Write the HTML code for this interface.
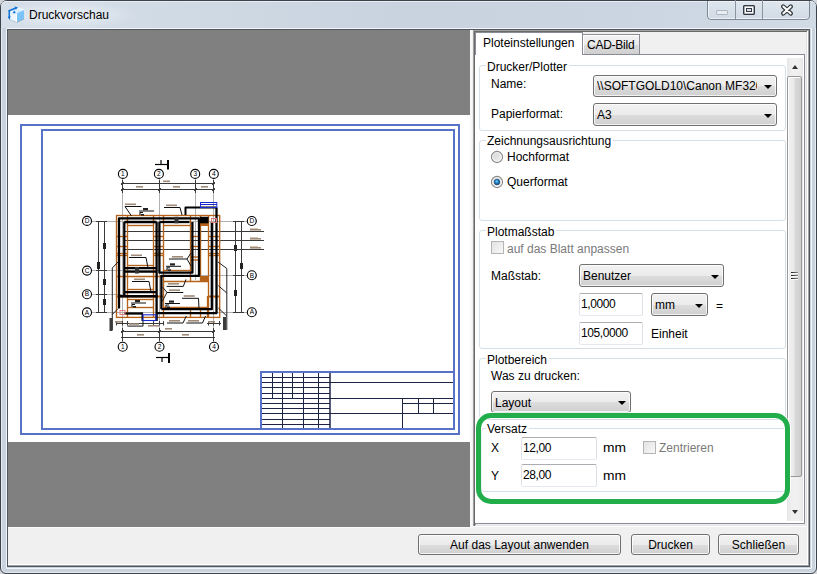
<!DOCTYPE html><html><head><meta charset="utf-8"><title>Druckvorschau</title><style>
*{margin:0;padding:0;box-sizing:border-box}
html,body{width:817px;height:574px;overflow:hidden;background:#d4d6d9}
body{position:relative;font-family:"Liberation Sans",sans-serif;font-size:12px}
.a{position:absolute}
.t{position:absolute;white-space:pre;font-size:12px;line-height:14px;font-family:"Liberation Sans",sans-serif}
.grp{position:absolute;border:1px solid #d5dfe5;border-radius:3px}
.lg{position:absolute;background:#fff;white-space:pre;font-size:12px;line-height:14px;padding:0 2px 0 1px}
.cb{position:absolute;border:1px solid #707070;border-radius:3px;background:linear-gradient(#f2f2f2 0%,#ebebeb 50%,#dddddd 51%,#cfcfcf 100%);box-shadow:inset 0 0 0 1px rgba(255,255,255,.75)}
.tb{position:absolute;border:1px solid #abadb3;border-top-color:#abadb3;border-left-color:#e2e3ea;border-right-color:#dbdfe6;border-bottom-color:#e3e9ef;background:#fff;border-radius:2px}
.btn{position:absolute;border:1px solid #707070;border-radius:3px;background:linear-gradient(#f2f2f2 0%,#ebebeb 50%,#dddddd 51%,#cfcfcf 100%);box-shadow:inset 0 0 0 1px rgba(255,255,255,.8);text-align:center;line-height:19px;white-space:pre}
.arr{position:absolute;width:0;height:0;border-left:4px solid transparent;border-right:4px solid transparent;border-top:4.5px solid #000}
</style></head><body>
<div class="a" style="left:0;top:0;width:817px;height:574px;border:1px solid #3d434a;border-radius:7px 7px 6px 6px;background:#c8d3de;box-shadow:inset 0 0 0 1px #e6ecf3"></div>
<div class="a" style="left:1px;top:1px;width:815px;height:27px;border-radius:5px 5px 0 0;background:linear-gradient(90deg,#d6dfe9 0%,#cfd9e4 25%,#c8d3df 50%,#cad5e1 75%,#d1dbe6 100%);border-top:1px solid #e9eef4"></div>
<div class="a" style="left:0;top:0;width:150px;height:28px;background:radial-gradient(ellipse 70px 14px at 68px 15px,rgba(240,244,249,.75),rgba(240,244,249,0))"></div>
<svg class="a" style="left:0;top:0" width="30" height="30" viewBox="0 0 30 30">
<path d="M10 10.5 L17 7.5 L24 10 L16.5 13.5 Z" fill="#d9eefd"/>
<path d="M10 10.5 L16.5 13.5 L16.5 22.5 L10 19.5 Z" fill="#eef7fe"/>
<path d="M16.5 13.5 L24 10 L24 19 L16.5 22.5 Z" fill="#7cc3f8"/>
<path d="M16.5 13.5 L16.5 22.5" stroke="#fff" stroke-width="1"/>
<path d="M10 10.5 L17 7.5 L24 10" stroke="#ffffff" stroke-width="0.8" fill="none"/>
<path d="M16.5 22.5 L24 19" stroke="#8aa3b8" stroke-width="0.8" fill="none"/>
<path d="M10 19.5 L16.5 22.5" stroke="#a9bccb" stroke-width="0.8" fill="none"/>
<path d="M9.3 10.5 L9.3 17.5" stroke="#1273d9" stroke-width="1.6"/>
<path d="M7.8 16.5 L10.8 16.5 L9.3 20 Z" fill="#1273d9"/>
<path d="M8.5 11 L16 8" stroke="#1273d9" stroke-width="1.6"/>
<path d="M14.5 6.5 L18 7.3 L15.8 9.8 Z" fill="#1273d9"/>
<path d="M12.5 13.3 L15.8 13.3 L14.3 10.5 Z" fill="#1273d9"/>
</svg>
<div class="t" style="left:29px;top:8px;color:#000;">Druckvorschau</div>
<div class="a" style="left:707px;top:-1px;width:103px;height:21px;border:1px solid #7d8895;border-radius:0 0 4px 4px;background:linear-gradient(#dfe6ee,#d2dbe5);box-shadow:inset 0 -1px 0 #eef3f8,inset 1px 0 0 #eef3f8"></div>
<div class="a" style="left:700px;top:0px;width:110px;height:1px;background:#3d434a"></div>
<div class="a" style="left:708px;top:1px;width:101px;height:1px;background:#eef2f6"></div>
<div class="a" style="left:735px;top:0px;width:1px;height:19px;background:#8a95a2"></div>
<div class="a" style="left:762px;top:0px;width:1px;height:19px;background:#8a95a2"></div>
<div class="a" style="left:716px;top:10px;width:12px;height:5px;border:1px solid #aeb7c1;background:#e9eef3;border-radius:1px"></div>
<div class="a" style="left:743px;top:5px;width:12px;height:10px;border:1px solid #353a42;background:#fff;border-radius:1px;box-shadow:inset 0 0 0 0.6px #6a7078"></div>
<div class="a" style="left:746px;top:8px;width:6px;height:4px;border:1px solid #353a42;background:#d5dde6"></div>
<svg class="a" style="left:780px;top:4px" width="14" height="12" viewBox="0 0 14 12">
<path d="M3.3 2.6 L10.7 9.4 M10.7 2.6 L3.3 9.4" stroke="#353a42" stroke-width="4.4" stroke-linecap="round"/>
<path d="M3.3 2.6 L10.7 9.4 M10.7 2.6 L3.3 9.4" stroke="#fff" stroke-width="2" stroke-linecap="round"/>
</svg>
<div class="a" style="left:6px;top:28px;width:806px;height:541px;border:1px solid #f3f6fa;border-radius:1px"></div>
<div class="a" style="left:7px;top:29px;width:803px;height:538px;border:1px solid #50565e;background:#f0f0f0;box-shadow:inset -1px -1px 0 #a0a0a0, inset -2px -2px 0 #fff"></div>
<div class="a" style="left:8px;top:30px;width:462px;height:497px;background:#808080"></div>
<div class="a" style="left:8px;top:115px;width:462px;height:327px;background:#fff"></div>
<div class="a" style="left:470px;top:30px;width:3px;height:497px;background:#f0f0f0"></div>
<div class="a" style="left:470px;top:30px;width:2px;height:497px;background:#f8f8f8"></div>
<div class="a" style="left:8px;top:527px;width:465px;height:1px;background:#fafafa"></div>
<svg class="a" style="left:0;top:0" width="817" height="574" viewBox="0 0 817 574"><rect x="21" y="125" width="438" height="309" stroke="#5872c8" stroke-width="2" fill="none"/><rect x="42" y="130" width="412" height="299" stroke="#5872c8" stroke-width="2" fill="none"/><rect x="260" y="371" width="2" height="58" fill="#5872c8"/><rect x="260" y="371" width="194" height="2" fill="#5872c8"/><line x1="262" y1="377.5" x2="330" y2="377.5" stroke="#1c2444" stroke-width="1"/><line x1="262" y1="382.5" x2="330" y2="382.5" stroke="#1c2444" stroke-width="1"/><line x1="262" y1="387.5" x2="330" y2="387.5" stroke="#1c2444" stroke-width="1"/><line x1="262" y1="393.5" x2="330" y2="393.5" stroke="#1c2444" stroke-width="1"/><line x1="262" y1="398.5" x2="330" y2="398.5" stroke="#1c2444" stroke-width="1"/><line x1="262" y1="403.5" x2="330" y2="403.5" stroke="#1c2444" stroke-width="1"/><line x1="262" y1="408.5" x2="330" y2="408.5" stroke="#1c2444" stroke-width="1"/><line x1="262" y1="413.5" x2="330" y2="413.5" stroke="#1c2444" stroke-width="1"/><line x1="262" y1="419.5" x2="330" y2="419.5" stroke="#1c2444" stroke-width="1"/><line x1="262" y1="424.5" x2="330" y2="424.5" stroke="#1c2444" stroke-width="1"/><line x1="272.5" y1="373" x2="272.5" y2="398.5" stroke="#1c2444" stroke-width="1"/><line x1="292.5" y1="373" x2="292.5" y2="398.5" stroke="#1c2444" stroke-width="1"/><line x1="282.5" y1="373" x2="282.5" y2="428" stroke="#1c2444" stroke-width="1"/><line x1="303.5" y1="373" x2="303.5" y2="428" stroke="#1c2444" stroke-width="1"/><line x1="318.5" y1="373" x2="318.5" y2="428" stroke="#1c2444" stroke-width="1"/><line x1="330" y1="373" x2="330" y2="428" stroke="#1c2444" stroke-width="1.5"/><line x1="330" y1="382.5" x2="453" y2="382.5" stroke="#1c2444" stroke-width="1"/><line x1="330" y1="398.5" x2="453" y2="398.5" stroke="#1c2444" stroke-width="1"/><line x1="330" y1="413.5" x2="453" y2="413.5" stroke="#1c2444" stroke-width="1"/><line x1="402.5" y1="398.5" x2="402.5" y2="428" stroke="#1c2444" stroke-width="1"/><line x1="418.5" y1="398.5" x2="418.5" y2="413.5" stroke="#1c2444" stroke-width="1"/><line x1="433.5" y1="398.5" x2="433.5" y2="413.5" stroke="#1c2444" stroke-width="1"/><line x1="402.5" y1="403.5" x2="453" y2="403.5" stroke="#1c2444" stroke-width="1"/><line x1="122.5" y1="178" x2="122.5" y2="342" stroke="#b0b0b0" stroke-width="1"/><line x1="159.5" y1="178" x2="159.5" y2="342" stroke="#b0b0b0" stroke-width="1"/><line x1="213.5" y1="178" x2="213.5" y2="342" stroke="#b0b0b0" stroke-width="1"/><line x1="195.5" y1="178" x2="195.5" y2="280" stroke="#b0b0b0" stroke-width="1"/><line x1="91" y1="221.5" x2="247" y2="221.5" stroke="#b0b0b0" stroke-width="1"/><line x1="91" y1="270.5" x2="160" y2="270.5" stroke="#b0b0b0" stroke-width="1"/><line x1="160" y1="275.5" x2="247" y2="275.5" stroke="#b0b0b0" stroke-width="1"/><line x1="91" y1="294.5" x2="126" y2="294.5" stroke="#b0b0b0" stroke-width="1"/><line x1="91" y1="312.5" x2="247" y2="312.5" stroke="#b0b0b0" stroke-width="1"/><line x1="155" y1="164.5" x2="168" y2="164.5" stroke="#000" stroke-width="1.2"/><line x1="161" y1="160" x2="161" y2="164.5" stroke="#000" stroke-width="1.2"/><line x1="168" y1="160" x2="168" y2="169.5" stroke="#000" stroke-width="2"/><line x1="156" y1="357.5" x2="169" y2="357.5" stroke="#000" stroke-width="1.2"/><line x1="162" y1="357.5" x2="162" y2="362" stroke="#000" stroke-width="1.2"/><line x1="169" y1="353" x2="169" y2="363" stroke="#000" stroke-width="2"/><line x1="121" y1="183.5" x2="215" y2="183.5" stroke="#3a3a3a" stroke-width="1"/><line x1="121" y1="189.5" x2="215" y2="189.5" stroke="#3a3a3a" stroke-width="1"/><line x1="122.5" y1="180" x2="122.5" y2="193" stroke="#3a3a3a" stroke-width="1"/><line x1="121.0" y1="191.0" x2="124.0" y2="188.0" stroke="#3a3a3a" stroke-width="1"/><line x1="159.5" y1="180" x2="159.5" y2="193" stroke="#3a3a3a" stroke-width="1"/><line x1="158.0" y1="191.0" x2="161.0" y2="188.0" stroke="#3a3a3a" stroke-width="1"/><line x1="195.5" y1="180" x2="195.5" y2="193" stroke="#3a3a3a" stroke-width="1"/><line x1="194.0" y1="191.0" x2="197.0" y2="188.0" stroke="#3a3a3a" stroke-width="1"/><line x1="213.5" y1="180" x2="213.5" y2="193" stroke="#3a3a3a" stroke-width="1"/><line x1="212.0" y1="191.0" x2="215.0" y2="188.0" stroke="#3a3a3a" stroke-width="1"/><line x1="121.0" y1="185.0" x2="124.0" y2="182.0" stroke="#3a3a3a" stroke-width="1"/><line x1="212.0" y1="185.0" x2="215.0" y2="182.0" stroke="#3a3a3a" stroke-width="1"/><line x1="121" y1="331.5" x2="215" y2="331.5" stroke="#3a3a3a" stroke-width="1"/><line x1="121" y1="337.5" x2="215" y2="337.5" stroke="#3a3a3a" stroke-width="1"/><line x1="122.5" y1="328" x2="122.5" y2="341" stroke="#3a3a3a" stroke-width="1"/><line x1="121.0" y1="333.0" x2="124.0" y2="330.0" stroke="#3a3a3a" stroke-width="1"/><line x1="159.5" y1="328" x2="159.5" y2="341" stroke="#3a3a3a" stroke-width="1"/><line x1="158.0" y1="333.0" x2="161.0" y2="330.0" stroke="#3a3a3a" stroke-width="1"/><line x1="213.5" y1="328" x2="213.5" y2="341" stroke="#3a3a3a" stroke-width="1"/><line x1="212.0" y1="333.0" x2="215.0" y2="330.0" stroke="#3a3a3a" stroke-width="1"/><line x1="116" y1="323.5" x2="164" y2="323.5" stroke="#3a3a3a" stroke-width="1"/><line x1="207" y1="323.5" x2="221" y2="323.5" stroke="#3a3a3a" stroke-width="1"/><line x1="116.5" y1="321" x2="116.5" y2="325.5" stroke="#3a3a3a" stroke-width="1"/><line x1="122.5" y1="321" x2="122.5" y2="325.5" stroke="#3a3a3a" stroke-width="1"/><line x1="127.5" y1="321" x2="127.5" y2="325.5" stroke="#3a3a3a" stroke-width="1"/><line x1="153.5" y1="321" x2="153.5" y2="325.5" stroke="#3a3a3a" stroke-width="1"/><line x1="159.5" y1="321" x2="159.5" y2="325.5" stroke="#3a3a3a" stroke-width="1"/><line x1="163.5" y1="321" x2="163.5" y2="325.5" stroke="#3a3a3a" stroke-width="1"/><line x1="208.5" y1="321" x2="208.5" y2="325.5" stroke="#3a3a3a" stroke-width="1"/><line x1="213.5" y1="321" x2="213.5" y2="325.5" stroke="#3a3a3a" stroke-width="1"/><line x1="219.5" y1="321" x2="219.5" y2="325.5" stroke="#3a3a3a" stroke-width="1"/><line x1="98.5" y1="221" x2="98.5" y2="313" stroke="#3a3a3a" stroke-width="1"/><line x1="104.5" y1="221" x2="104.5" y2="313" stroke="#3a3a3a" stroke-width="1"/><line x1="96" y1="221.5" x2="107" y2="221.5" stroke="#3a3a3a" stroke-width="1"/><line x1="96" y1="270.5" x2="107" y2="270.5" stroke="#3a3a3a" stroke-width="1"/><line x1="96" y1="294.5" x2="107" y2="294.5" stroke="#3a3a3a" stroke-width="1"/><line x1="96" y1="312.5" x2="107" y2="312.5" stroke="#3a3a3a" stroke-width="1"/><rect x="103" y="243" width="3" height="6" fill="#222"/><rect x="103" y="279" width="3" height="6" fill="#222"/><rect x="103" y="299" width="3" height="6" fill="#222"/><rect x="97" y="262" width="3" height="7" fill="#222"/><line x1="235.5" y1="221" x2="235.5" y2="313" stroke="#3a3a3a" stroke-width="1"/><line x1="241.5" y1="221" x2="241.5" y2="313" stroke="#3a3a3a" stroke-width="1"/><line x1="233" y1="221.5" x2="244" y2="221.5" stroke="#3a3a3a" stroke-width="1"/><line x1="233" y1="275.5" x2="244" y2="275.5" stroke="#3a3a3a" stroke-width="1"/><line x1="233" y1="312.5" x2="244" y2="312.5" stroke="#3a3a3a" stroke-width="1"/><rect x="234" y="245" width="3" height="6" fill="#222"/><rect x="234" y="290" width="3" height="6" fill="#222"/><rect x="240" y="263" width="3" height="6" fill="#222"/><line x1="124" y1="231.5" x2="264" y2="231.5" stroke="#3a3a3a" stroke-width="1"/><line x1="124" y1="240.5" x2="264" y2="240.5" stroke="#3a3a3a" stroke-width="1"/><line x1="124" y1="249.5" x2="264" y2="249.5" stroke="#3a3a3a" stroke-width="1"/><rect x="250" y="228.5" width="8" height="1.5" fill="#b09070"/><rect x="250" y="237.5" width="8" height="1.5" fill="#b09070"/><rect x="250" y="246.5" width="8" height="1.5" fill="#b09070"/><circle cx="122.9" cy="173.9" r="4.5" stroke="#000" stroke-width="1.1" fill="#fff"/><text x="122.9" y="176.1" font-family="Liberation Sans" font-size="6.5" font-weight="normal" text-anchor="middle" fill="#000">1</text><circle cx="158.9" cy="173.9" r="4.5" stroke="#000" stroke-width="1.1" fill="#fff"/><text x="158.9" y="176.1" font-family="Liberation Sans" font-size="6.5" font-weight="normal" text-anchor="middle" fill="#000">2</text><circle cx="195.2" cy="173.9" r="4.5" stroke="#000" stroke-width="1.1" fill="#fff"/><text x="195.2" y="176.1" font-family="Liberation Sans" font-size="6.5" font-weight="normal" text-anchor="middle" fill="#000">3</text><circle cx="213.8" cy="173.9" r="4.5" stroke="#000" stroke-width="1.1" fill="#fff"/><text x="213.8" y="176.1" font-family="Liberation Sans" font-size="6.5" font-weight="normal" text-anchor="middle" fill="#000">4</text><circle cx="122.7" cy="346.8" r="4.5" stroke="#000" stroke-width="1.1" fill="#fff"/><text x="122.7" y="349.0" font-family="Liberation Sans" font-size="6.5" font-weight="normal" text-anchor="middle" fill="#000">1</text><circle cx="159.5" cy="346.8" r="4.5" stroke="#000" stroke-width="1.1" fill="#fff"/><text x="159.5" y="349.0" font-family="Liberation Sans" font-size="6.5" font-weight="normal" text-anchor="middle" fill="#000">2</text><circle cx="214" cy="346.8" r="4.5" stroke="#000" stroke-width="1.1" fill="#fff"/><text x="214" y="349.0" font-family="Liberation Sans" font-size="6.5" font-weight="normal" text-anchor="middle" fill="#000">4</text><circle cx="87" cy="220.9" r="4.5" stroke="#000" stroke-width="1.1" fill="#fff"/><text x="87" y="223.1" font-family="Liberation Sans" font-size="6.5" font-weight="normal" text-anchor="middle" fill="#000">D</text><circle cx="87" cy="270.6" r="4.5" stroke="#000" stroke-width="1.1" fill="#fff"/><text x="87" y="272.8" font-family="Liberation Sans" font-size="6.5" font-weight="normal" text-anchor="middle" fill="#000">C</text><circle cx="87" cy="294.2" r="4.5" stroke="#000" stroke-width="1.1" fill="#fff"/><text x="87" y="296.4" font-family="Liberation Sans" font-size="6.5" font-weight="normal" text-anchor="middle" fill="#000">B</text><circle cx="87" cy="312.4" r="4.5" stroke="#000" stroke-width="1.1" fill="#fff"/><text x="87" y="314.59999999999997" font-family="Liberation Sans" font-size="6.5" font-weight="normal" text-anchor="middle" fill="#000">A</text><circle cx="251.8" cy="221" r="4.5" stroke="#000" stroke-width="1.1" fill="#fff"/><text x="251.8" y="223.2" font-family="Liberation Sans" font-size="6.5" font-weight="normal" text-anchor="middle" fill="#000">D</text><circle cx="251.8" cy="275.3" r="4.5" stroke="#000" stroke-width="1.1" fill="#fff"/><text x="251.8" y="277.5" font-family="Liberation Sans" font-size="6.5" font-weight="normal" text-anchor="middle" fill="#000">B</text><circle cx="251.8" cy="312.2" r="4.5" stroke="#000" stroke-width="1.1" fill="#fff"/><text x="251.8" y="314.4" font-family="Liberation Sans" font-size="6.5" font-weight="normal" text-anchor="middle" fill="#000">A</text><rect x="116.5" y="215.5" width="103.2" height="101.9" stroke="#b5621a" stroke-width="1.35" fill="none"/><line x1="127.5" y1="215.5" x2="127.5" y2="317.4" stroke="#b5621a" stroke-width="1.35"/><line x1="153.5" y1="215.5" x2="153.5" y2="317.4" stroke="#b5621a" stroke-width="1.35"/><line x1="163.5" y1="215.5" x2="163.5" y2="317.4" stroke="#b5621a" stroke-width="1.35"/><line x1="208.5" y1="215.5" x2="208.5" y2="317.4" stroke="#b5621a" stroke-width="1.35"/><line x1="190.5" y1="215.5" x2="190.5" y2="281.5" stroke="#b5621a" stroke-width="1.35"/><line x1="190.5" y1="307.5" x2="190.5" y2="317.4" stroke="#b5621a" stroke-width="1.35"/><line x1="200.5" y1="215.5" x2="200.5" y2="281.5" stroke="#b5621a" stroke-width="1.35"/><line x1="200.5" y1="307.5" x2="200.5" y2="317.4" stroke="#b5621a" stroke-width="1.35"/><line x1="207.6" y1="296" x2="207.6" y2="317" stroke="#b5621a" stroke-width="1.5"/><line x1="116.5" y1="236.5" x2="127.5" y2="236.5" stroke="#b5621a" stroke-width="1.35"/><line x1="153.5" y1="236.5" x2="163.5" y2="236.5" stroke="#b5621a" stroke-width="1.35"/><line x1="190.5" y1="236.5" x2="200.5" y2="236.5" stroke="#b5621a" stroke-width="1.35"/><line x1="208.5" y1="236.5" x2="219.7" y2="236.5" stroke="#b5621a" stroke-width="1.35"/><line x1="116.5" y1="246.5" x2="127.5" y2="246.5" stroke="#b5621a" stroke-width="1.35"/><line x1="153.5" y1="246.5" x2="163.5" y2="246.5" stroke="#b5621a" stroke-width="1.35"/><line x1="190.5" y1="246.5" x2="200.5" y2="246.5" stroke="#b5621a" stroke-width="1.35"/><line x1="208.5" y1="246.5" x2="219.7" y2="246.5" stroke="#b5621a" stroke-width="1.35"/><line x1="116.5" y1="253.5" x2="127.5" y2="253.5" stroke="#b5621a" stroke-width="1.35"/><line x1="153.5" y1="253.5" x2="163.5" y2="253.5" stroke="#b5621a" stroke-width="1.35"/><line x1="208.5" y1="253.5" x2="219.7" y2="253.5" stroke="#b5621a" stroke-width="1.35"/><line x1="116.5" y1="255.5" x2="127.5" y2="255.5" stroke="#b5621a" stroke-width="1.35"/><line x1="153.5" y1="255.5" x2="163.5" y2="255.5" stroke="#b5621a" stroke-width="1.35"/><line x1="208.5" y1="255.5" x2="219.7" y2="255.5" stroke="#b5621a" stroke-width="1.35"/><line x1="190.5" y1="257" x2="200.5" y2="257" stroke="#b5621a" stroke-width="1.35"/><line x1="190.5" y1="260" x2="200.5" y2="260" stroke="#b5621a" stroke-width="1.35"/><line x1="127.5" y1="225.5" x2="153.5" y2="225.5" stroke="#b5621a" stroke-width="1.35"/><line x1="163.5" y1="225.5" x2="190.5" y2="225.5" stroke="#b5621a" stroke-width="1.35"/><line x1="127.5" y1="265.5" x2="153.5" y2="265.5" stroke="#b5621a" stroke-width="1.35"/><line x1="163.5" y1="270.5" x2="190.5" y2="270.5" stroke="#b5621a" stroke-width="1.35"/><line x1="116.5" y1="276.5" x2="163.5" y2="276.5" stroke="#b5621a" stroke-width="1.35"/><line x1="163.5" y1="281.5" x2="208.5" y2="281.5" stroke="#b5621a" stroke-width="1.35"/><line x1="127.5" y1="289.5" x2="153.5" y2="289.5" stroke="#b5621a" stroke-width="1.35"/><line x1="116.5" y1="296.5" x2="163.5" y2="296.5" stroke="#b5621a" stroke-width="2"/><line x1="208.5" y1="296.5" x2="219.7" y2="296.5" stroke="#b5621a" stroke-width="2"/><line x1="127.5" y1="299.5" x2="153.5" y2="299.5" stroke="#b5621a" stroke-width="1.35"/><line x1="127.5" y1="307.5" x2="153.5" y2="307.5" stroke="#b5621a" stroke-width="1.35"/><line x1="163.5" y1="307.5" x2="208.5" y2="307.5" stroke="#b5621a" stroke-width="1.35"/><rect x="200.5" y="276" width="8" height="5" fill="#b5621a"/><rect x="200.5" y="223" width="8" height="3" fill="#b5621a"/><polyline points="119,308.5 119,218.3 199,218.3" stroke="#000" stroke-width="2.3" fill="none" stroke-linejoin="round"/><polyline points="124.3,296 124.3,222" stroke="#000" stroke-width="2.3" fill="none" stroke-linejoin="round"/><polyline points="124.3,222 156.6,222" stroke="#000" stroke-width="2.3" fill="none" stroke-linejoin="round"/><line x1="124.3" y1="268.2" x2="156.6" y2="268.2" stroke="#000" stroke-width="2.3"/><polyline points="124.3,271.7 156.6,271.7" stroke="#000" stroke-width="2.3" fill="none" stroke-linejoin="round"/><line x1="124.3" y1="292.2" x2="156.6" y2="292.2" stroke="#000" stroke-width="2.3"/><line x1="156.6" y1="222" x2="156.6" y2="321" stroke="#000" stroke-width="2.3"/><line x1="119" y1="296.2" x2="157.5" y2="296.2" stroke="#000" stroke-width="2.4"/><line x1="124.3" y1="313.5" x2="142.5" y2="313.5" stroke="#000" stroke-width="2.3"/><line x1="142.3" y1="312.5" x2="142.3" y2="321" stroke="#000" stroke-width="1.6"/><polyline points="159.4,222 189.5,222" stroke="#000" stroke-width="2.3" fill="none" stroke-linejoin="round"/><polyline points="159.4,222 159.4,272.7 192.4,272.7 192.4,222" stroke="#000" stroke-width="2.3" fill="none" stroke-linejoin="round"/><polyline points="161.4,309.2 161.4,275.9 199,275.9 199,218.3" stroke="#000" stroke-width="2.3" fill="none" stroke-linejoin="round"/><polyline points="211.8,222 211.8,309.2 161.4,309.2" stroke="#000" stroke-width="2.3" fill="none" stroke-linejoin="round"/><polyline points="216.5,207.5 216.5,313.2 156.6,313.2" stroke="#000" stroke-width="2.3" fill="none" stroke-linejoin="round"/><rect x="199.5" y="216.8" width="9" height="6.5" fill="#000"/><polyline points="185.5,215 185.5,207.5 216.5,207.5" stroke="#000" stroke-width="2" fill="none" stroke-linejoin="round"/><rect x="200.5" y="202.5" width="16.3" height="5" stroke="#1a2ad0" stroke-width="1" fill="none"/><line x1="200.5" y1="204.5" x2="216.8" y2="204.5" stroke="#1a2ad0" stroke-width="1"/><rect x="143" y="314.8" width="13" height="5.7" stroke="#1a2ad0" stroke-width="1.1" fill="none"/><rect x="211.5" y="218.5" width="5" height="4" stroke="#e07878" stroke-width="1" fill="none"/><rect x="120" y="310.5" width="5" height="4" stroke="#e07878" stroke-width="1" fill="none"/><rect x="174.5" y="216.8" width="4" height="6.5" fill="#333"/><rect x="135" y="267" width="4" height="6.5" fill="#333"/><rect x="125" y="203.5" width="11" height="1.6" fill="#a08a78"/><rect x="166" y="204.5" width="11" height="1.6" fill="#a08a78"/><rect x="131" y="254.5" width="11" height="1.6" fill="#a08a78"/><rect x="134" y="278.5" width="11" height="1.6" fill="#a08a78"/><rect x="172" y="256" width="11" height="1.6" fill="#a08a78"/><rect x="168" y="283" width="11" height="1.6" fill="#a08a78"/><rect x="169" y="289.4" width="11" height="1.6" fill="#a08a78"/><rect x="183.7" y="295.2" width="11" height="1.6" fill="#a08a78"/><rect x="169" y="320" width="11" height="1.6" fill="#a08a78"/><rect x="188" y="320" width="11" height="1.6" fill="#a08a78"/><rect x="148" y="325" width="11" height="1.6" fill="#a08a78"/><rect x="250" y="229" width="11" height="1.6" fill="#a08a78"/><rect x="250" y="238" width="11" height="1.6" fill="#a08a78"/><rect x="250" y="247" width="11" height="1.6" fill="#a08a78"/><rect x="136" y="186" width="7" height="1.6" fill="#a08a78"/><rect x="173" y="186" width="7" height="1.6" fill="#a08a78"/><rect x="201" y="186" width="7" height="1.6" fill="#a08a78"/><rect x="163" y="180.5" width="7" height="1.6" fill="#a08a78"/><rect x="137" y="334" width="7" height="1.6" fill="#a08a78"/><rect x="182" y="334" width="7" height="1.6" fill="#a08a78"/><rect x="165" y="328" width="7" height="1.6" fill="#a08a78"/><rect x="115" y="321" width="7" height="1.6" fill="#a08a78"/><rect x="208" y="321" width="7" height="1.6" fill="#a08a78"/><line x1="125" y1="206.5" x2="141.5" y2="206.5" stroke="#111" stroke-width="1"/><line x1="125" y1="206.5" x2="131.5" y2="216" stroke="#111" stroke-width="1"/><polyline points="164,207.5 180,207.5 182,215" stroke="#111" stroke-width="1" fill="none" stroke-linejoin="round"/><polyline points="129,257.5 146,257.5 148,268" stroke="#111" stroke-width="1" fill="none" stroke-linejoin="round"/><polyline points="132,281.5 149,281.5 151,292" stroke="#111" stroke-width="1" fill="none" stroke-linejoin="round"/><line x1="169" y1="259" x2="187" y2="259" stroke="#111" stroke-width="1"/><polyline points="191,253 187,259 191,266" stroke="#111" stroke-width="1" fill="none" stroke-linejoin="round"/><polyline points="166.7,286.4 183.3,286.4 186,279.4" stroke="#111" stroke-width="1" fill="none" stroke-linejoin="round"/><line x1="166.7" y1="292.5" x2="183.3" y2="292.5" stroke="#111" stroke-width="1"/><polyline points="182,298.3 198.5,298.3 199,309" stroke="#111" stroke-width="1" fill="none" stroke-linejoin="round"/><polyline points="167,323 183,323 186.3,316.1" stroke="#111" stroke-width="1" fill="none" stroke-linejoin="round"/><polyline points="186.3,323 202.5,323 205.5,316.1" stroke="#111" stroke-width="1" fill="none" stroke-linejoin="round"/><polyline points="127.4,326.1 143,326.1 143,321" stroke="#111" stroke-width="1" fill="none" stroke-linejoin="round"/><rect x="129" y="323.2" width="10" height="1.6" fill="#a08a78"/><line x1="139" y1="211" x2="154" y2="211" stroke="#111" stroke-width="1"/><rect x="143" y="208" width="5" height="2.2" fill="#222"/><polyline points="140,215 140,212.5 143,212.5" stroke="#111" stroke-width="1.1" fill="none" stroke-linejoin="round"/><rect x="141" y="214" width="3" height="1.6" fill="#222"/><line x1="166" y1="266.3" x2="181" y2="266.3" stroke="#111" stroke-width="1"/><rect x="170" y="263.3" width="5" height="2.2" fill="#222"/><polyline points="167,270.3 167,267.8 170,267.8" stroke="#111" stroke-width="1.1" fill="none" stroke-linejoin="round"/><rect x="168" y="269.3" width="3" height="1.6" fill="#222"/><line x1="131" y1="303" x2="146" y2="303" stroke="#111" stroke-width="1"/><rect x="135" y="300" width="5" height="2.2" fill="#222"/><polyline points="132,307 132,304.5 135,304.5" stroke="#111" stroke-width="1.1" fill="none" stroke-linejoin="round"/><rect x="133" y="306" width="3" height="1.6" fill="#222"/><line x1="165" y1="303.5" x2="180" y2="303.5" stroke="#111" stroke-width="1"/><rect x="169" y="300.5" width="5" height="2.2" fill="#222"/><polyline points="166,307.5 166,305.0 169,305.0" stroke="#111" stroke-width="1.1" fill="none" stroke-linejoin="round"/><rect x="167" y="306.5" width="3" height="1.6" fill="#222"/><polyline points="118,262 112.3,268 112.3,330" stroke="#222" stroke-width="1" fill="none" stroke-linejoin="round"/><line x1="112.3" y1="314.4" x2="118" y2="308.7" stroke="#222" stroke-width="1"/><polyline points="218,262 226.8,268.5 226.8,330" stroke="#222" stroke-width="1" fill="none" stroke-linejoin="round"/><line x1="218.3" y1="285.6" x2="226.8" y2="293" stroke="#222" stroke-width="1"/><line x1="218.3" y1="308" x2="226.8" y2="316" stroke="#222" stroke-width="1"/><polyline points="162.2,286.8 167,292.3 162.2,301.5" stroke="#222" stroke-width="1" fill="none" stroke-linejoin="round"/><rect x="109.5" y="318" width="3" height="13" fill="#3a3a3a"/><rect x="223" y="317" width="3" height="13" fill="#3a3a3a"/></svg>
<div class="a" style="left:473px;top:30px;width:335px;height:497px;background:#f0f0f0"></div>
<div class="a" style="left:473px;top:30px;width:335px;height:1px;background:#a0a0a0"></div>
<div class="a" style="left:473px;top:31px;width:335px;height:1px;background:#6a6a6a"></div>
<div class="a" style="left:473px;top:30px;width:1px;height:497px;background:#a0a0a0"></div>
<div class="a" style="left:474px;top:31px;width:1px;height:496px;background:#6a6a6a"></div>
<div class="a" style="left:475px;top:32px;width:1px;height:493px;background:#898c95"></div>
<div class="a" style="left:807px;top:31px;width:1px;height:496px;background:#ffffff"></div>
<div class="a" style="left:473px;top:526px;width:335px;height:1px;background:#ffffff"></div>
<div class="a" style="left:806px;top:32px;width:1px;height:494px;background:#e3e3e3"></div>
<div class="a" style="left:475px;top:525px;width:332px;height:1px;background:#e3e3e3"></div>
<div class="a" style="left:475px;top:54px;width:330px;height:470px;border:1px solid #898c95;border-left:none;background:#fff"></div>
<div class="a" style="left:476px;top:32px;width:106px;height:23px;background:#fff"></div>
<div class="a" style="left:582px;top:32px;width:1px;height:23px;background:#898c95"></div>
<div class="a" style="left:475px;top:32px;width:108px;height:1px;background:#898c95"></div>
<div class="t" style="left:483px;top:36px;color:#000;">Ploteinstellungen</div>
<div class="a" style="left:582px;top:34px;width:58px;height:21px;border:1px solid #898c95;background:linear-gradient(#f2f2f2 0%,#ebebeb 50%,#dddddd 51%,#cfcfcf 100%);box-shadow:inset 1px 1px 0 #fff"></div>
<div class="t" style="left:587px;top:38px;color:#000;letter-spacing:-0.25px">CAD-Bild</div>
<div class="a" style="left:787px;top:58px;width:16px;height:463px;background:linear-gradient(90deg,#e6e6e6,#f0f0f0 30%,#f0f0f0 70%,#e8e8e8)"></div>
<div class="a" style="left:791.5px;top:65px;width:0;height:0;border-left:3.5px solid transparent;border-right:3.5px solid transparent;border-bottom:4px solid #333"></div>
<div class="a" style="left:791.5px;top:510px;width:0;height:0;border-left:3.5px solid transparent;border-right:3.5px solid transparent;border-top:4px solid #333"></div>
<div class="a" style="left:787px;top:76px;width:15px;height:401px;border:1px solid #979797;border-radius:2px;background:linear-gradient(90deg,#f0f0f0 0%,#eaeaea 45%,#d8d8d8 55%,#cfcfcf 100%);box-shadow:inset 1px 1px 0 #fff"></div>
<div class="a" style="left:791px;top:272px;width:7px;height:1px;background:linear-gradient(90deg,#1a1a1a,#8a8a8a)"></div>
<div class="a" style="left:791px;top:273px;width:7px;height:1px;background:#fafafa"></div>
<div class="a" style="left:791px;top:275px;width:7px;height:1px;background:linear-gradient(90deg,#1a1a1a,#8a8a8a)"></div>
<div class="a" style="left:791px;top:276px;width:7px;height:1px;background:#fafafa"></div>
<div class="a" style="left:791px;top:278px;width:7px;height:1px;background:linear-gradient(90deg,#1a1a1a,#8a8a8a)"></div>
<div class="a" style="left:791px;top:279px;width:7px;height:1px;background:#fafafa"></div>
<div class="grp" style="left:479px;top:65px;width:307px;height:66px"></div>
<div class="lg" style="left:486px;top:60px">Drucker/Plotter</div>
<div class="grp" style="left:479px;top:140px;width:307px;height:81px"></div>
<div class="lg" style="left:486px;top:134px">Zeichnungsausrichtung</div>
<div class="grp" style="left:479px;top:230px;width:307px;height:119px"></div>
<div class="lg" style="left:486px;top:225px">Plotmaßstab</div>
<div class="grp" style="left:479px;top:358px;width:307px;height:62px"></div>
<div class="lg" style="left:486px;top:353px">Plotbereich</div>
<div class="grp" style="left:481px;top:428px;width:305px;height:64px"></div>
<div class="lg" style="left:486px;top:422px">Versatz</div>
<div class="t" style="left:491px;top:77px;color:#000;">Name:</div>
<div class="t" style="left:491px;top:107px;color:#000;">Papierformat:</div>
<div class="a" style="left:593px;top:75px;width:184px;height:22px;overflow:hidden"></div>
<div class="cb" style="left:593px;top:75px;width:184px;height:22px"></div>
<div class="t" style="left:597px;top:80px;color:#000;"></div>
<div class="arr" style="left:764px;top:84.5px"></div>
<div class="a" style="left:597px;top:79px;width:160px;height:14px;overflow:hidden"><div class="t" style="left:0;top:0;letter-spacing:0px">\\SOFTGOLD10\Canon MF3200</div></div>
<div class="cb" style="left:593px;top:103px;width:184px;height:23px"></div>
<div class="t" style="left:597px;top:108px;color:#000;">A3</div>
<div class="arr" style="left:764px;top:113.5px"></div>
<svg class="a" style="left:489.8px;top:149.8px" width="14" height="14" viewBox="0 0 14 14">
<defs><linearGradient id="rg156" x1="0" y1="0" x2="1" y2="1"><stop offset="0" stop-color="#cfcfcf"/><stop offset="1" stop-color="#f7f7f7"/></linearGradient>
<radialGradient id="rc156" cx="45%" cy="40%" r="60%"><stop offset="0" stop-color="#7fd4ff"/><stop offset="0.45" stop-color="#1f86c8"/><stop offset="1" stop-color="#0b3e70"/></radialGradient></defs>
<circle cx="7" cy="7" r="5.6" fill="url(#rg156)" stroke="#8a8a8a" stroke-width="1.1"/>
<circle cx="7" cy="7" r="4.3" fill="none" stroke="#f4f4f4" stroke-width="0.9"/>

</svg>
<div class="t" style="left:507px;top:150px;color:#000;">Hochformat</div>
<svg class="a" style="left:489.8px;top:174.8px" width="14" height="14" viewBox="0 0 14 14">
<defs><linearGradient id="rg181" x1="0" y1="0" x2="1" y2="1"><stop offset="0" stop-color="#cfcfcf"/><stop offset="1" stop-color="#f7f7f7"/></linearGradient>
<radialGradient id="rc181" cx="45%" cy="40%" r="60%"><stop offset="0" stop-color="#7fd4ff"/><stop offset="0.45" stop-color="#1f86c8"/><stop offset="1" stop-color="#0b3e70"/></radialGradient></defs>
<circle cx="7" cy="7" r="5.6" fill="url(#rg181)" stroke="#8a8a8a" stroke-width="1.1"/>
<circle cx="7" cy="7" r="4.3" fill="none" stroke="#f4f4f4" stroke-width="0.9"/>
<circle cx="7" cy="7" r="2.9" fill="url(#rc181)" stroke="#2a4a6a" stroke-width="0.5"/>
</svg>
<div class="t" style="left:507px;top:175px;color:#000;">Querformat</div>
<div class="a" style="left:491px;top:241px;width:13px;height:13px;border:1px solid #b4b4b4;background:linear-gradient(135deg,#e2e2e2,#f8f8f8)"></div>
<div class="t" style="left:507px;top:242px;color:#7a7a7a;">auf das Blatt anpassen</div>
<div class="t" style="left:491px;top:269px;color:#000;">Maßstab:</div>
<div class="cb" style="left:579px;top:264px;width:145px;height:23px"></div>
<div class="t" style="left:583px;top:269px;color:#000;">Benutzer</div>
<div class="arr" style="left:711px;top:274.5px"></div>
<div class="tb" style="left:579px;top:293px;width:64px;height:23px"></div>
<div class="t" style="left:581px;top:297px;color:#000;letter-spacing:-0.4px">1,0000</div>
<div class="cb" style="left:651px;top:293px;width:57px;height:23px"></div>
<div class="t" style="left:655px;top:298px;color:#000;">mm</div>
<div class="arr" style="left:695px;top:303.5px"></div>
<div class="t" style="left:716px;top:299px;color:#000;">=</div>
<div class="tb" style="left:579px;top:322px;width:64px;height:23px"></div>
<div class="t" style="left:581px;top:326px;color:#000;letter-spacing:-0.4px">105,0000</div>
<div class="t" style="left:651px;top:327px;color:#000;">Einheit</div>
<div class="t" style="left:491px;top:369px;color:#000;">Was zu drucken:</div>
<div class="cb" style="left:491px;top:391px;width:140px;height:22px"></div>
<div class="t" style="left:495px;top:396px;color:#000;">Layout</div>
<div class="arr" style="left:618px;top:400.5px"></div>
<div class="t" style="left:491px;top:441px;color:#000;">X</div>
<div class="tb" style="left:521px;top:437px;width:76px;height:23px"></div>
<div class="t" style="left:523px;top:441px;color:#000;letter-spacing:-0.4px">12,00</div>
<div class="t" style="left:603px;top:441px;color:#000;transform:scaleX(1.15);transform-origin:0 0">mm</div>
<div class="a" style="left:643px;top:441px;width:13px;height:13px;border:1px solid #b4b4b4;background:linear-gradient(135deg,#e2e2e2,#f8f8f8)"></div>
<div class="t" style="left:659px;top:441px;color:#7a7a7a;">Zentrieren</div>
<div class="t" style="left:491px;top:469px;color:#000;">Y</div>
<div class="tb" style="left:521px;top:464px;width:76px;height:23px"></div>
<div class="t" style="left:523px;top:468px;color:#000;letter-spacing:-0.4px">28,00</div>
<div class="t" style="left:603px;top:469px;color:#000;transform:scaleX(1.15);transform-origin:0 0">mm</div>
<div class="a" style="left:476px;top:413px;width:314px;height:91px;border:5px solid #22ad4b;border-radius:15px;box-shadow:0 0 0 1px rgba(255,255,255,.85),inset 0 0 0 1px rgba(255,255,255,.6)"></div>
<div class="btn" style="left:418px;top:534px;width:203px;height:21px;padding-top:1px">Auf das Layout anwenden</div>
<div class="btn" style="left:631px;top:534px;width:79px;height:21px;padding-top:1px">Drucken</div>
<div class="btn" style="left:718px;top:534px;width:81px;height:21px;padding-top:1px">Schließen</div>
</body></html>
